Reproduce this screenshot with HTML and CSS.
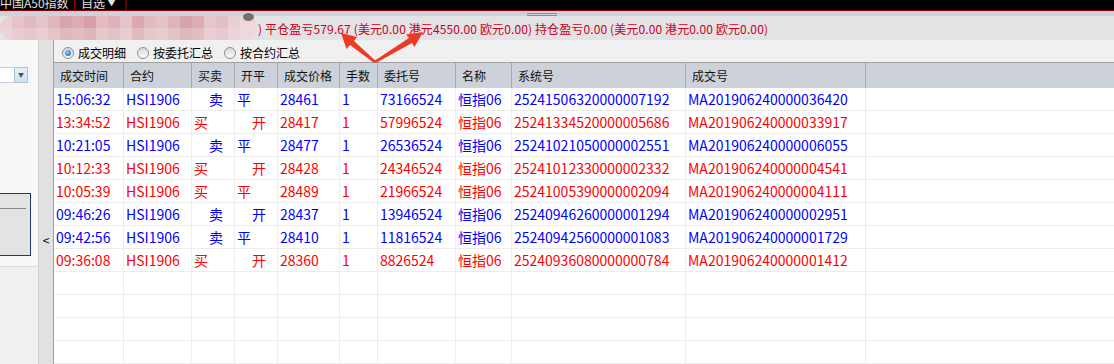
FILE: index.html
```html
<!DOCTYPE html>
<html lang="zh-CN">
<head>
  <meta charset="UTF-8">
  <meta name="viewport" content="width=device-width, initial-scale=1.0">
  <title>成交明细</title>
  <link rel="stylesheet" href="styles.css">
</head>
<body>
  <div class="topbar">
    <span class="tname">中国A50指数</span>
    <span class="sep">|</span>
    <span class="tname">自选</span>
    <span class="tri">▼</span>
    <span class="sep">|</span>
  </div>
  <div class="strip"><div class="grip"></div></div>

  <div class="status">
    <div class="pill"></div>
    <div class="knob"></div>
    <span class="paren">)</span>
    <span class="pnl">平仓盈亏579.67 (美元0.00 港元4550.00 欧元0.00) 持仓盈亏0.00 (美元0.00 港元0.00 欧元0.00)</span>
  </div>

  <div class="main">
    <div class="left">
      <div class="lpanel">
        <div class="combo"><div class="combo-field"></div><div class="combo-btn">▼</div></div>
        <div class="navbox"><div class="navline"></div></div>
      </div>
    </div>
    <div class="splitter"><span>&lt;</span></div>

    <div class="content">
      <div class="radios">
        <label class="radio"><span class="dot on"></span>成交明细</label>
        <label class="radio"><span class="dot"></span>按委托汇总</label>
        <label class="radio"><span class="dot"></span>按合约汇总</label>
      </div>

      <div class="grid">
        <div class="row head">
          <div>成交时间</div><div>合约</div><div>买卖</div><div>开平</div><div>成交价格</div><div>手数</div><div>委托号</div><div>名称</div><div>系统号</div><div>成交号</div><div></div>
        </div>
        <div class="row sell">
          <div>15:06:32</div><div>HSI1906</div><div class="ind">卖</div><div>平</div><div>28461</div><div>1</div><div>73166524</div><div>恒指06</div><div>25241506320000007192</div><div>MA201906240000036420</div><div></div>
        </div>
        <div class="row buy">
          <div>13:34:52</div><div>HSI1906</div><div>买</div><div class="ind">开</div><div>28417</div><div>1</div><div>57996524</div><div>恒指06</div><div>25241334520000005686</div><div>MA201906240000033917</div><div></div>
        </div>
        <div class="row sell">
          <div>10:21:05</div><div>HSI1906</div><div class="ind">卖</div><div>平</div><div>28477</div><div>1</div><div>26536524</div><div>恒指06</div><div>25241021050000002551</div><div>MA201906240000006055</div><div></div>
        </div>
        <div class="row buy">
          <div>10:12:33</div><div>HSI1906</div><div>买</div><div class="ind">开</div><div>28428</div><div>1</div><div>24346524</div><div>恒指06</div><div>25241012330000002332</div><div>MA201906240000004541</div><div></div>
        </div>
        <div class="row buy">
          <div>10:05:39</div><div>HSI1906</div><div>买</div><div>平</div><div>28489</div><div>1</div><div>21966524</div><div>恒指06</div><div>25241005390000002094</div><div>MA201906240000004111</div><div></div>
        </div>
        <div class="row sell">
          <div>09:46:26</div><div>HSI1906</div><div class="ind">卖</div><div class="ind">开</div><div>28437</div><div>1</div><div>13946524</div><div>恒指06</div><div>25240946260000001294</div><div>MA201906240000002951</div><div></div>
        </div>
        <div class="row sell">
          <div>09:42:56</div><div>HSI1906</div><div class="ind">卖</div><div>平</div><div>28410</div><div>1</div><div>11816524</div><div>恒指06</div><div>25240942560000001083</div><div>MA201906240000001729</div><div></div>
        </div>
        <div class="row buy">
          <div>09:36:08</div><div>HSI1906</div><div>买</div><div class="ind">开</div><div>28360</div><div>1</div><div>8826524</div><div>恒指06</div><div>25240936080000000784</div><div>MA201906240000001412</div><div></div>
        </div>
        <div class="row"><div></div><div></div><div></div><div></div><div></div><div></div><div></div><div></div><div></div><div></div><div></div></div>
        <div class="row"><div></div><div></div><div></div><div></div><div></div><div></div><div></div><div></div><div></div><div></div><div></div></div>
        <div class="row"><div></div><div></div><div></div><div></div><div></div><div></div><div></div><div></div><div></div><div></div><div></div></div>
        <div class="row"><div></div><div></div><div></div><div></div><div></div><div></div><div></div><div></div><div></div><div></div><div></div></div>
      </div>
    </div>
  </div>

  <!-- annotation arrows drawn over the screenshot -->
  <svg class="arrows" width="1114" height="364" viewBox="0 0 1114 364">
    <polygon points="341,33 357,37 354,41 375.8,61 374.2,63 350,45 346.5,49" />
    <polygon points="423,32 414.5,47 412,43 375.8,63 374.2,61 409,38 406,34.5" />
  </svg>
</body>
</html>
```

FILE: styles.css
```css
* {
  margin: 0;
  padding: 0;
  box-sizing: border-box;
}

body {
  width: 1114px;
  height: 364px;
  overflow: hidden;
  position: relative;
  background: #f0f0f0;
  font-family: "Noto Sans CJK SC", "Noto Sans", sans-serif;
  font-size: 12px;
  color: #111;
}

.topbar {
  height: 11px;
  background: #000;
  border-bottom: 1px solid #9a0000;
  overflow: hidden;
  display: flex;
  align-items: flex-start;
  line-height: 14px;
}

.topbar span {
  margin-top: -4px;
}

.tname {
  color: #e2e2e2;
  font-size: 12px;
}

.sep {
  color: #d00000;
  margin: 0 5px 0 4px;
}

.tri {
  color: #e2e2e2;
  font-size: 9px;
  margin-left: 2px;
  margin-right: 4px;
}

.strip {
  height: 5px;
  background: #cdd3dd;
  padding-left: 527px;
  padding-top: 2px;
}

.grip {
  width: 30px;
  height: 3px;
  border-top: 1px solid #8c8c8c;
  border-bottom: 1px solid #8c8c8c;
}

.status {
  height: 24px;
  background: #e3e3e5;
  display: flex;
  align-items: center;
  position: relative;
  color: #c8001e;
}

.pill {
  width: 257px;
  height: 24px;
  border-radius: 12px;
  background:
    linear-gradient(rgba(255, 255, 255, 0) 50%, rgba(236, 222, 226, 0.35) 50%),
    linear-gradient(90deg,
      #ebcfd3 0 12px, #e6c3c8 12px 24px, #e2bbc1 24px 36px, #e6c5ca 36px 48px,
      #e0b5bc 48px 60px, #d9a4ad 60px 72px, #dcabb3 72px 84px, #d7a0a9 84px 96px,
      #e3bbc1 96px 108px, #dfb2b9 108px 120px, #e6c3c8 120px 132px, #dba8b0 132px 144px,
      #e2bac0 144px 156px, #e5c1c6 156px 168px, #dfb3ba 168px 180px, #d8a3ac 180px 192px,
      #ddacb4 192px 204px, #e7c6cb 204px 216px, #e4bfc5 216px 228px, #eacfd3 228px 240px,
      #edd7da 240px 257px);
}

.knob {
  position: absolute;
  left: 243px;
  top: -3px;
  width: 11px;
  height: 8px;
  border-radius: 50%;
  background: #707070;
}

.paren {
  margin-left: 1px;
}

.pnl {
  margin-left: 3px;
  white-space: nowrap;
  letter-spacing: 0.12px;
}

.main {
  display: flex;
  height: 324px;
}

.left {
  width: 39px;
  background: #f0f0f0;
  border-right: 1px solid #d2d2d2;
}

.lpanel {
  height: 227px;
  background: #f7f7f7;
  border-bottom: 1px solid #dcdcdc;
  padding-top: 27px;
}

.combo {
  display: flex;
  width: 28px;
  height: 16px;
}

.combo-field {
  width: 14px;
  background: #fff;
  border-top: 1px solid #c7cdd4;
  border-bottom: 1px solid #c7cdd4;
}

.combo-btn {
  width: 14px;
  background: linear-gradient(#e4f0f7, #cfe3ef);
  border: 1px solid #a6c2d4;
  color: #555;
  font-size: 6px;
  line-height: 14px;
  text-align: center;
}

.navbox {
  margin-top: 110px;
  width: 31px;
  height: 63px;
  background: #e3e3e3;
  border: 1px solid #1d3b6a;
  border-left: none;
  padding-top: 14px;
}

.navline {
  width: 26px;
  height: 1px;
  background: #8c8c8c;
}

.splitter {
  width: 15px;
  background: #e1e1e1;
  border-right: 1px solid #a0a0a0;
  padding-top: 193px;
  text-align: center;
}

.splitter span {
  display: block;
  line-height: 14px;
  font-size: 12px;
  color: #000;
}

.content {
  flex: 1;
  display: flex;
  flex-direction: column;
}

.radios {
  height: 25px;
  padding: 3px 0 0 8px;
  display: flex;
  align-items: center;
  gap: 11px;
  color: #000;
}

.radio {
  display: flex;
  align-items: center;
  gap: 4px;
}

.dot {
  width: 12px;
  height: 12px;
  border-radius: 50%;
  border: 1px solid #8e8e8e;
  background: linear-gradient(#d8d8d8, #fbfbfb);
  display: flex;
  align-items: center;
  justify-content: center;
}

.dot.on::after {
  content: "";
  width: 6px;
  height: 6px;
  border-radius: 50%;
  background: radial-gradient(circle at 40% 35%, #9fd0f6, #2a78c8 70%);
}

.grid {
  flex: 1;
  background: #fff;
}

.row {
  display: grid;
  grid-template-columns: 70px 68px 43px 43px 62px 38px 78px 56px 174px 180px 1fr;
  height: 23px;
}

.row div {
  border-right: 1px solid #ececec;
  border-bottom: 1px solid #ececec;
  padding-left: 2px;
  font-size: 14px;
  line-height: 22px;
  white-space: nowrap;
  overflow: hidden;
}

.row div:last-child {
  border-right: none;
}

.row .ind {
  padding-left: 17px;
}

.head {
  height: 26px;
  background: #ccd1da;
  border-top: 1px solid #a0a0a0;
}

.head div {
  border-right-color: #a5a9af;
  border-bottom: none;
  padding-left: 6px;
  font-size: 12px;
  line-height: 25px;
  color: #111;
}

.sell {
  color: #0000ff;
}

.buy {
  color: #ff0000;
}

.arrows {
  position: absolute;
  left: 0;
  top: 0;
  pointer-events: none;
}

.arrows polygon {
  fill: #ec3a25;
}
```
